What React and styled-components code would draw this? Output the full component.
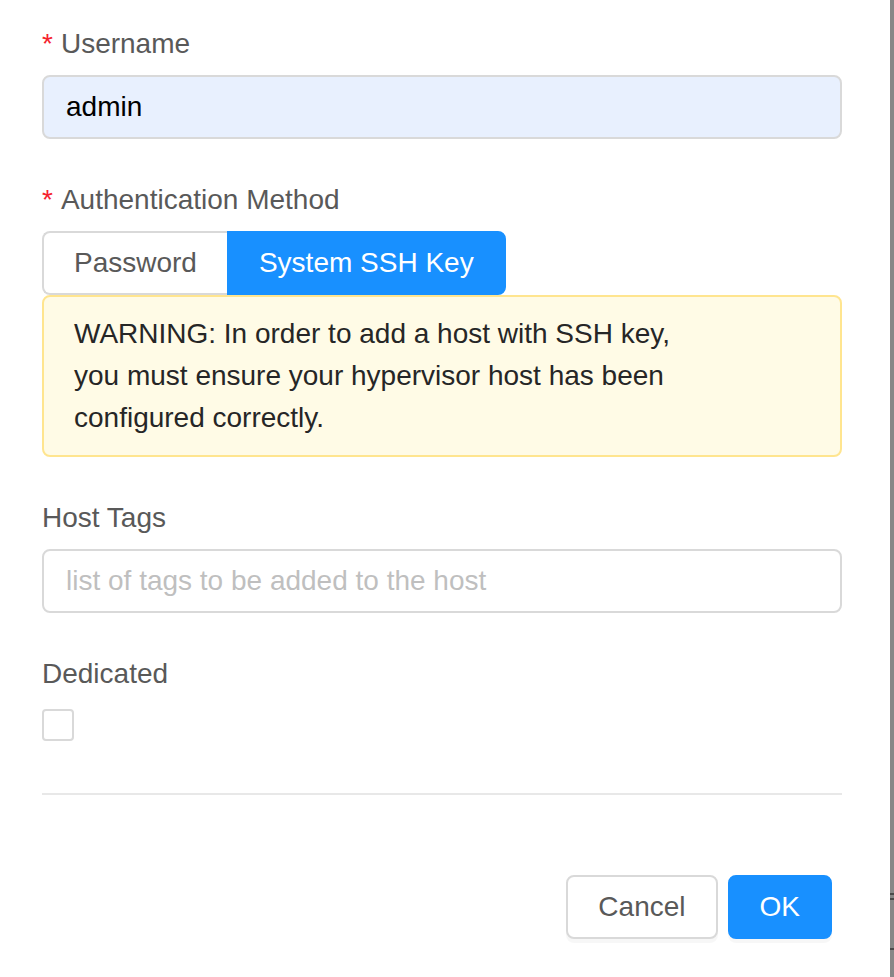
import React from "react";
import styled, { createGlobalStyle } from "styled-components";

const Global = createGlobalStyle`
  html, body { margin: 0; padding: 0; background: #fff; }
  body { font-family: "Liberation Sans", Arial, sans-serif; }
  * { box-sizing: border-box; }
`;

const Page = styled.div`
  display: flex;
  width: 894px;
  height: 977px;
  overflow: hidden;
`;

const Modal = styled.div`
  flex: 0 0 890px;
  display: flex;
  flex-direction: column;
  background: #fff;
`;

const Body = styled.div`
  padding: 22px 0 0 42px;
  width: 842px;
  display: flex;
  flex-direction: column;
`;

const Item = styled.div`
  display: flex;
  flex-direction: column;
  margin-bottom: ${(p) => p.$mb}px;
`;

const Label = styled.label`
  font-size: 28px;
  line-height: 44px;
  color: #595959;
  margin-bottom: ${(p) => p.$mb ?? 9}px;
`;

const Star = styled.span`
  color: #f5222d;
  margin-right: 8px;
  font-family: SimSun, "Liberation Sans", sans-serif;
`;

const Input = styled.div`
  height: 64px;
  border: 2px solid #d9d9d9;
  border-radius: 8px;
  padding: 0 22px;
  display: flex;
  align-items: center;
  font-size: 28px;
  background: ${(p) => (p.$filled ? "#e8f0fe" : "#fff")};
  color: ${(p) => (p.$placeholder ? "#bfbfbf" : "#000")};
`;

const RadioGroup = styled.div`
  display: flex;
`;

const RadioBtn = styled.div`
  height: 64px;
  padding: 0 30px;
  display: flex;
  align-items: center;
  font-size: 28px;
  white-space: nowrap;
  border: 2px solid ${(p) => (p.$active ? "#1890ff" : "#d9d9d9")};
  background: ${(p) => (p.$active ? "#1890ff" : "#fff")};
  color: ${(p) => (p.$active ? "#fff" : "#595959")};
  border-radius: ${(p) => (p.$first ? "8px 0 0 8px" : "0 8px 8px 0")};
  ${(p) => (p.$first ? "border-right: none;" : "")}
`;

const Alert = styled.div`
  border: 2px solid #ffe58f;
  background: #fffbe6;
  border-radius: 8px;
  padding: 16px 30px;
  font-size: 28px;
  line-height: 42px;
  color: #262626;
`;

const Checkbox = styled.div`
  width: 32px;
  height: 32px;
  border: 2px solid #d9d9d9;
  border-radius: 4px;
  background: #fff;
  margin-top: 2px;
`;

const Divider = styled.div`
  height: 2px;
  background: #e8e8e8;
  margin-top: 52px;
`;

const Footer = styled.div`
  display: flex;
  justify-content: flex-end;
  gap: 10px;
  padding: 80px 58px 0 0;
`;

const Button = styled.button`
  height: 64px;
  padding: 0 30px;
  font-family: inherit;
  font-size: 28px;
  border-radius: 8px;
  border: 2px solid ${(p) => (p.$primary ? "#1890ff" : "#d9d9d9")};
  background: ${(p) => (p.$primary ? "#1890ff" : "#fff")};
  color: ${(p) => (p.$primary ? "#fff" : "#595959")};
  box-shadow: 0 4px 0 rgba(0, 0, 0, 0.03);
  min-width: ${(p) => (p.$primary ? "104px" : "auto")};
`;

const Strip = styled.div`
  flex: 0 0 4px;
  background: #878787;
  display: flex;
  flex-direction: column;
  padding-top: 893px;
`;

const Mark = styled.div`
  height: 2px;
  width: 4px;
  background: #4a4a4a;
  margin-bottom: ${(p) => p.$mb}px;
`;

export default function App() {
  return (
    <Page>
      <Global />
      <Modal>
        <Body>
          <Item $mb={39}>
            <Label>
              <Star>*</Star>Username
            </Label>
            <Input $filled>admin</Input>
          </Item>
          <Item $mb={39}>
            <Label $mb={9}>
              <Star>*</Star>Authentication Method
            </Label>
            <RadioGroup>
              <RadioBtn $first>Password</RadioBtn>
              <RadioBtn $active>System SSH Key</RadioBtn>
            </RadioGroup>
            <Alert>
              WARNING: In order to add a host with SSH key,
              <br />
              you must ensure your hypervisor host has been
              <br />
              configured correctly.
            </Alert>
          </Item>
          <Item $mb={39}>
            <Label>Host Tags</Label>
            <Input $placeholder>list of tags to be added to the host</Input>
          </Item>
          <Item $mb={0}>
            <Label $mb={11}>Dedicated</Label>
            <Checkbox />
          </Item>
          <Divider />
        </Body>
        <Footer>
          <Button>Cancel</Button>
          <Button $primary>OK</Button>
        </Footer>
      </Modal>
      <Strip>
        <Mark $mb={3} />
        <Mark $mb={48} />
        <Mark $mb={0} />
      </Strip>
    </Page>
  );
}
